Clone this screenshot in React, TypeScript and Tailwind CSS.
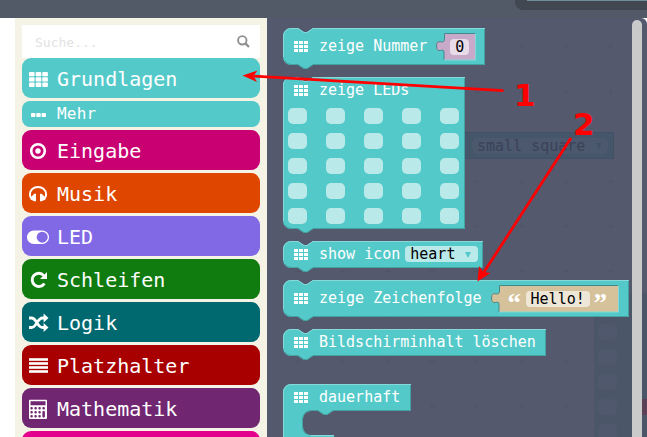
import type { ReactNode } from "react";

const Grid9 = ({ className }: { className?: string }) => (
  <svg width="14" height="11" viewBox="0 0 14 11" className={className} fill="#fff" shapeRendering="crispEdges">
    {[0, 4, 8].map((y) => [0, 5, 10].map((x) => <rect key={`${x}-${y}`} x={x} y={y} width="4" height="3" />))}
  </svg>
);

const icons: Record<string, ReactNode> = {
  th: [6, 11.3, 16.6].map((y) =>
    [4, 10.7, 17.3].map((x) => <rect key={`${x}-${y}`} x={x} y={y} width="5.6" height="4.3" rx="0.9" />)
  ),
  dot: (
    <>
      <circle cx="13" cy="13" r="6.8" fill="none" stroke="#fff" strokeWidth="2.6" />
      <circle cx="13" cy="13" r="2.7" />
    </>
  ),
  phones: (
    <>
      <path d="M6.4 17C5 15.8 4.9 14.4 4.9 13.4C4.9 9 8.6 6 13 6s8.1 3 8.1 7.4c0 1-.1 2.4-1.5 3.6" fill="none" stroke="#fff" strokeWidth="2" />
      <path d="M5.5 16.5L9.3 12.8H11v7.4H9.3L5.5 18.6zM20.5 16.5L16.7 12.8H15v7.4h1.7L20.5 18.6z" />
    </>
  ),
  toggle: (
    <>
      <rect x="2" y="6.5" width="22" height="13.5" rx="6.75" />
      <circle cx="17.2" cy="13.2" r="5.5" fill="#8169e6" />
    </>
  ),
  repeat: (
    <>
      <path d="M18.8 8.6A6.6 6.6 0 1 0 19.4 16.4" fill="none" stroke="#fff" strokeWidth="2.9" />
      <path d="M22 5v7h-7z" />
    </>
  ),
  random: (
    <>
      <path d="M4 8h2.4c5.6 0 5.3 9.5 11.4 9.5H20M4 17.5h2.4C12 17.5 11.7 8 17.8 8H20" fill="none" stroke="#fff" strokeWidth="2.8" />
      <path d="M18.6 3.6l4.9 4.4-4.9 4.4zM18.6 13.1l4.9 4.4-4.9 4.4z" />
    </>
  ),
  lines: [5, 9, 13, 17].map((y) => <rect key={y} x="4" y={y + 0.2} width="19" height="2.6" />),
  calc: (
    <>
      <path
        fillRule="evenodd"
        d="M5 3.7h16a1 1 0 0 1 1 1v17.3a1 1 0 0 1-1 1H5a1 1 0 0 1-1-1V4.7a1 1 0 0 1 1-1zM5.5 5.200v4h15v-4z"
      />
      <g fill="#712672">
        {[11, 15, 19].map((y) =>
          [5.4, 9.4, 13.4].map((x) => <rect key={`${x}-${y}`} x={x} y={y} width="2.4" height="2.4" rx="1" />)
        )}
        <rect x="17.4" y="11" width="2.5" height="2.4" rx="1" />
        <rect x="17.4" y="15" width="2.5" height="6.4" rx="1" />
      </g>
    </>
  ),
};

const categories = [
  { name: "Eingabe", icon: "dot", color: "bg-[#c90072]" },
  { name: "Musik", icon: "phones", color: "bg-[#df4600]" },
  { name: "LED", icon: "toggle", color: "bg-[#8169e6]" },
  { name: "Schleifen", icon: "repeat", color: "bg-[#107c10]" },
  { name: "Logik", icon: "random", color: "bg-[#006970]" },
  { name: "Platzhalter", icon: "lines", color: "bg-[#a80000]" },
  { name: "Mathematik", icon: "calc", color: "bg-[#712672]" },
];

function Category({ name, icon, color }: { name: string; icon: string; color: string }) {
  return (
    <div className={`flex h-10 shrink-0 items-center rounded-[9px] pl-[3px] ${color}`}>
      <svg width="26" height="24" viewBox="0 0 26 24" fill="#fff">
        {icons[icon]}
      </svg>
      <span className="ml-[6px] mt-[2px] text-[20px] leading-6 text-white">{name}</span>
    </div>
  );
}

function Block({ w, h, children, loop }: { w: number; h: number; children: ReactNode; loop?: boolean }) {
  const d = loop
    ? `M0 8A8 8 0 0 1 8 0H${w}V${h}H50l-6 4h-3l-6-4H28A8 8 0 0 0 20 ${h + 8}V${h + 16}A8 8 0 0 0 28 ${h + 24}H51V90H0z`
    : `M0 8A8 8 0 0 1 8 0H15l6 4h3l6-4H${w}V${h}H30l-6 4h-3l-6-4H8A8 8 0 0 1 0 ${h - 8}z`;
  const light = loop ? `M.5 60V8A7.5 7.5 0 0 1 8 .5H${w}M28 ${h + 24.5}H51` : `M.5 ${h - 8}V8A7.5 7.5 0 0 1 8 .5H15l6 4h3l6-4H${w}`;
  const dark = loop
    ? `M${w - 0.5} 1V${h - 0.5}H50l-6 4h-3l-6-4H28A8.5 8.5 0 0 0 19.5 ${h + 8}V${h + 16}A8.5 8.5 0 0 0 23 ${h + 23}`
    : `M${w - 0.5} 1V${h - 0.5}H30l-6 4h-3l-6-4H8A7.5 7.5 0 0 1 2 ${h - 4}`;
  return (
    <div className="grid shrink-0 justify-start" style={{ height: h }}>
      <svg width={w} height={h} className="col-start-1 row-start-1 overflow-visible">
        <path d={d} fill="#54c9c9" />
        <path d={light} fill="none" stroke="#87d9d9" />
        <path d={dark} fill="none" stroke="#43a1a1" />
      </svg>
      <div className="col-start-1 row-start-1 text-[15px] leading-4 text-white">{children}</div>
    </div>
  );
}

function Label({ children }: { children: ReactNode }) {
  return (
    <>
      <Grid9 className="ml-[11px] mt-px shrink-0" />
      <span className="ml-[11px] whitespace-pre">{children}</span>
    </>
  );
}

function Socket({ w, fill, children }: { w: number; fill: string; children: ReactNode }) {
  return (
    <div className="grid h-[27px]">
      <svg width={w + 8} height="27" className="col-start-1 row-start-1 overflow-visible">
        <path d={`M8 0H${w + 8}V27H8V19C8 14 0 23 0 13S8 13 8 6z`} fill={fill} />
        <path d={`M${w + 8} .5H8.500V6C8.500 13 .5 4 .5 13S8 14 8 19V27`} fill="none" stroke="#43888a" />
        <path d={`M8 27H${w + 8.5}V1`} fill="none" stroke="#87d9d9" />
      </svg>
      <div className="col-start-1 row-start-1 flex h-[27px] items-center pl-2">{children}</div>
    </div>
  );
}

export default function App() {
  return (
    <div className="relative flex h-[437px] w-[647px] flex-col overflow-hidden bg-white font-['DejaVu_Sans_Mono',monospace]">
      <header className="flex h-[18px] shrink-0 justify-end bg-[#535a67]">
        <div className="h-[10px] w-[132px] rounded-bl-[8px] bg-[#414851] pl-3">
          <div className="h-px bg-[#6f8f98]" />
        </div>
      </header>
      <div className="flex min-h-0 flex-1">
        <aside className="ml-[15px] flex w-[252px] shrink-0 flex-col gap-[3px] overflow-hidden bg-[#f5f3e6] px-[7px] pt-[7px]">
          <div className="-mb-[3px] flex h-[33px] shrink-0 items-center justify-between bg-white pl-[13px] pr-[10px]">
            <span className="mt-[3px] text-[13px] text-[#e2e2e2]">Suche...</span>
            <svg width="13" height="13" viewBox="0 0 13 13" fill="none" stroke="#8f8f8f" strokeWidth="1.9">
              <circle cx="5.3" cy="5.3" r="4.2" />
              <path d="M8.4 8.4L12 12" strokeWidth="2.2" />
            </svg>
          </div>
          <Category name="Grundlagen" icon="th" color="bg-[#54c9c9]" />
          <div className="flex h-[26px] shrink-0 items-center rounded-[8px] bg-[#54c9c9] pl-[9px]">
            <svg width="15" height="4" viewBox="0 0 15 4" fill="#fff" className="mt-[2px]">
              <rect width="4.4" height="4" rx=".8" />
              <rect x="5.3" width="4.4" height="4" rx=".8" />
              <rect x="10.6" width="4.4" height="4" rx=".8" />
            </svg>
            <span className="ml-[11px] text-[16px] leading-5 tracking-[0.2px] text-white">Mehr</span>
          </div>
          {categories.map((c) => (
            <Category key={c.name} {...c} />
          ))}
          <div className="h-10 shrink-0 rounded-[9px] bg-[#e3008c]" />
        </aside>

        <main className="relative flex-1 overflow-hidden rounded-tr-[6px] bg-[#54596d]">
          {/* workspace seen through the flyout */}
          <svg width="380" height="419" className="absolute left-0 top-0">
            <defs>
              <pattern id="marks" width="44.7" height="44.9" patternUnits="userSpaceOnUse" x="8.5" y="6.5">
                <path d="M22.5 19.5v6M19.5 22.5h6" stroke="#4f5469" />
              </pattern>
            </defs>
            <rect width="380" height="419" fill="url(#marks)" />
            <rect x="327" y="275" width="53" height="150" fill="#4b5669" />
            <rect x="375" y="381" width="5" height="16" fill="#5b4057" />
            {[306, 331, 356, 381, 406].map((y) => (
              <rect key={y} x="331" y={y} width="19" height="16" rx="5" fill="#50586d" />
            ))}
          </svg>
          <div className="absolute left-[190px] top-[114px] flex h-[27px] w-[157px] items-center border border-[#425067] bg-[#45566a] pl-[14px]">
            <div className="flex h-4 w-[136px] items-center rounded-[5px] bg-[#4c586d] pl-[5px] text-[15px] leading-4 text-[#3a4259]">
              small square
              <svg width="6" height="6" className="ml-[11px]">
                <path d="M0 0h6L3 6z" fill="#405167" />
              </svg>
            </div>
          </div>

          <div className="relative flex flex-col gap-3 pl-4 pt-[10px]">
            <Block w={202} h={37}>
              <div className="flex h-9 items-center">
                <Label>zeige Nummer</Label>
                <div className="ml-[9px] mt-px">
                  <Socket w={31} fill="#c8a9c9">
                    <span className="ml-[6px] flex h-4 w-[19px] items-center justify-center rounded-[4px] bg-[#e8dce9] text-black">0</span>
                  </Socket>
                </div>
              </div>
            </Block>
            <Block w={182} h={152}>
              <div className="flex h-[26px] items-center">
                <Label>zeige LEDs</Label>
              </div>
              <div className="grid grid-cols-[repeat(5,38px)] gap-y-[9px] pl-[5px] pt-[5px]">
                {Array.from({ length: 25 }, (_, i) => (
                  <div key={i} className="h-4 w-[19px] rounded-[5px] bg-[#bae9e9]" />
                ))}
              </div>
            </Block>
            <Block w={200} h={27}>
              <div className="flex h-[26px] items-center">
                <Label>show icon</Label>
                <div className="ml-[5px] flex h-4 w-[73px] items-center rounded-[4px] bg-[#bae9e9] pl-[5px] text-black">
                  heart
                  <svg width="6" height="6" className="ml-[10px] mt-[2px]">
                    <path d="M0 0h6L3 6z" fill="#54c9c9" />
                  </svg>
                </div>
              </div>
            </Block>
            <Block w={346} h={37}>
              <div className="flex h-9 items-center">
                <Label>zeige Zeichenfolge</Label>
                <div className="ml-[9px] mt-px">
                  <Socket w={119} fill="#d5c29a">
                    <span className="ml-[9px] mt-[9px] h-4 w-4 font-['Liberation_Serif',serif] text-[27px] font-bold leading-4">“</span>
                    <span className="ml-[2px] flex h-4 w-16 items-center rounded-[4px] bg-[#eee7d7] pl-[5px] text-black">Hello!</span>
                    <span className="ml-1 mt-[9px] h-4 font-['Liberation_Serif',serif] text-[27px] font-bold leading-4">”</span>
                  </Socket>
                </div>
              </div>
            </Block>
            <Block w={263} h={27}>
              <div className="flex h-[26px] items-center">
                <Label>Bildschirminhalt löschen</Label>
              </div>
            </Block>
            <div className="mt-4">
              <Block w={128} h={27} loop>
                <div className="flex h-[26px] items-center">
                  <Label>dauerhaft</Label>
                </div>
              </Block>
            </div>
          </div>
          <div className="absolute left-[365px] top-[2px] h-[430px] w-[10px] rounded-full bg-[#cacaca]" />
        </main>
      </div>

      <svg width="647" height="437" className="absolute left-0 top-0" fill="#f00" fontFamily="DejaVu Sans, sans-serif" fontWeight="bold" fontSize="31">
        <path d="M503.5 90.7L254 76.2M571 138L484 272" stroke="#f00" strokeWidth="2.800" />
        <path d="M242.5 75.5L257.5 70.5L253.5 76L257 82zM477.5 281.5L479 266L483.5 272L490.5 273z" />
        <text x="514" y="106">1</text>
        <text x="573" y="135">2</text>
      </svg>
    </div>
  );
}
